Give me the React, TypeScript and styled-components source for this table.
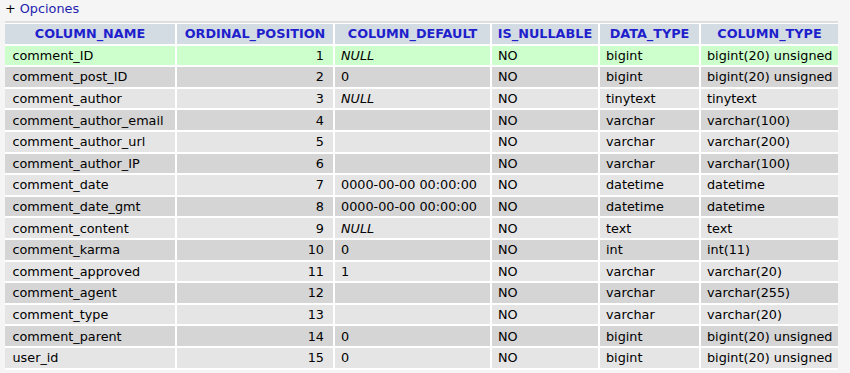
import React from "react";
import styled, { createGlobalStyle } from "styled-components";

const Global = createGlobalStyle`
  html, body { margin: 0; padding: 0; background: #f5f5f5; }
  body { font-family: "DejaVu Sans", sans-serif; font-size: 12.8px; color: #000; }
`;

const Page = styled.div`
  padding: 1px 5px 0 5px;
`;

const Options = styled.div`
  height: 20px;
  line-height: 15px;
  color: #000;
  a { color: #2323b0; text-decoration: none; }
`;

const Table = styled.table`
  border-collapse: separate;
  border-spacing: 0;
  table-layout: fixed;
  width: 833px;
  border-top: 2px solid #dedede;
`;

const Th = styled.th`
  background: #d3dce3;
  color: #1f1fcc;
  font-weight: bold;
  text-align: center;
  height: 19.6px;
  padding: 0 5px;
  border-top: 1px solid #fff;
  border-right: 2px solid #fff;
  border-bottom: 2px solid #fff;
  white-space: nowrap;
  &:last-child { border-right: none; }
`;

const Tr = styled.tr<{ $tone: "mark" | "odd" | "even" }>`
  background: ${(p) => (p.$tone === "mark" ? "#ccffcc" : p.$tone === "odd" ? "#e5e5e5" : "#d5d5d5")};
`;

const Td = styled.td<{ $num?: boolean; $null?: boolean }>`
  height: 19.6px;
  padding: 0 9px 0 6px;
  text-align: ${(p) => (p.$num ? "right" : "left")};
  font-style: ${(p) => (p.$null ? "italic" : "normal")};
  border-right: 2px solid #fff;
  border-bottom: 2px solid #fff;
  white-space: nowrap;
  overflow: hidden;
  &:first-child { padding-left: 7.5px; }
  &:last-child { border-right: none; }
`;

const widths = [172, 158, 157, 108, 101, 137];
const headers = ["COLUMN_NAME", "ORDINAL_POSITION", "COLUMN_DEFAULT", "IS_NULLABLE", "DATA_TYPE", "COLUMN_TYPE"];

type Row = [string, number, string | null, string, string, string];
const rows: Row[] = [
  ["comment_ID", 1, null, "NO", "bigint", "bigint(20) unsigned"],
  ["comment_post_ID", 2, "0", "NO", "bigint", "bigint(20) unsigned"],
  ["comment_author", 3, null, "NO", "tinytext", "tinytext"],
  ["comment_author_email", 4, "", "NO", "varchar", "varchar(100)"],
  ["comment_author_url", 5, "", "NO", "varchar", "varchar(200)"],
  ["comment_author_IP", 6, "", "NO", "varchar", "varchar(100)"],
  ["comment_date", 7, "0000-00-00 00:00:00", "NO", "datetime", "datetime"],
  ["comment_date_gmt", 8, "0000-00-00 00:00:00", "NO", "datetime", "datetime"],
  ["comment_content", 9, null, "NO", "text", "text"],
  ["comment_karma", 10, "0", "NO", "int", "int(11)"],
  ["comment_approved", 11, "1", "NO", "varchar", "varchar(20)"],
  ["comment_agent", 12, "", "NO", "varchar", "varchar(255)"],
  ["comment_type", 13, "", "NO", "varchar", "varchar(20)"],
  ["comment_parent", 14, "0", "NO", "bigint", "bigint(20) unsigned"],
  ["user_id", 15, "0", "NO", "bigint", "bigint(20) unsigned"],
];

export default function App() {
  return (
    <Page>
      <Global />
      <Options>+ <a href="#">Opciones</a></Options>
      <Table>
        <colgroup>
          {widths.map((w, i) => (
            <col key={i} style={{ width: w }} />
          ))}
        </colgroup>
        <thead>
          <tr>
            {headers.map((h) => (
              <Th key={h}>{h}</Th>
            ))}
          </tr>
        </thead>
        <tbody>
          {rows.map((r, i) => (
            <Tr key={r[0]} $tone={i === 0 ? "mark" : i % 2 === 0 ? "odd" : "even"}>
              <Td>{r[0]}</Td>
              <Td $num>{r[1]}</Td>
              <Td $null={r[2] === null}>{r[2] === null ? "NULL" : r[2]}</Td>
              <Td>{r[3]}</Td>
              <Td>{r[4]}</Td>
              <Td>{r[5]}</Td>
            </Tr>
          ))}
        </tbody>
      </Table>
    </Page>
  );
}
